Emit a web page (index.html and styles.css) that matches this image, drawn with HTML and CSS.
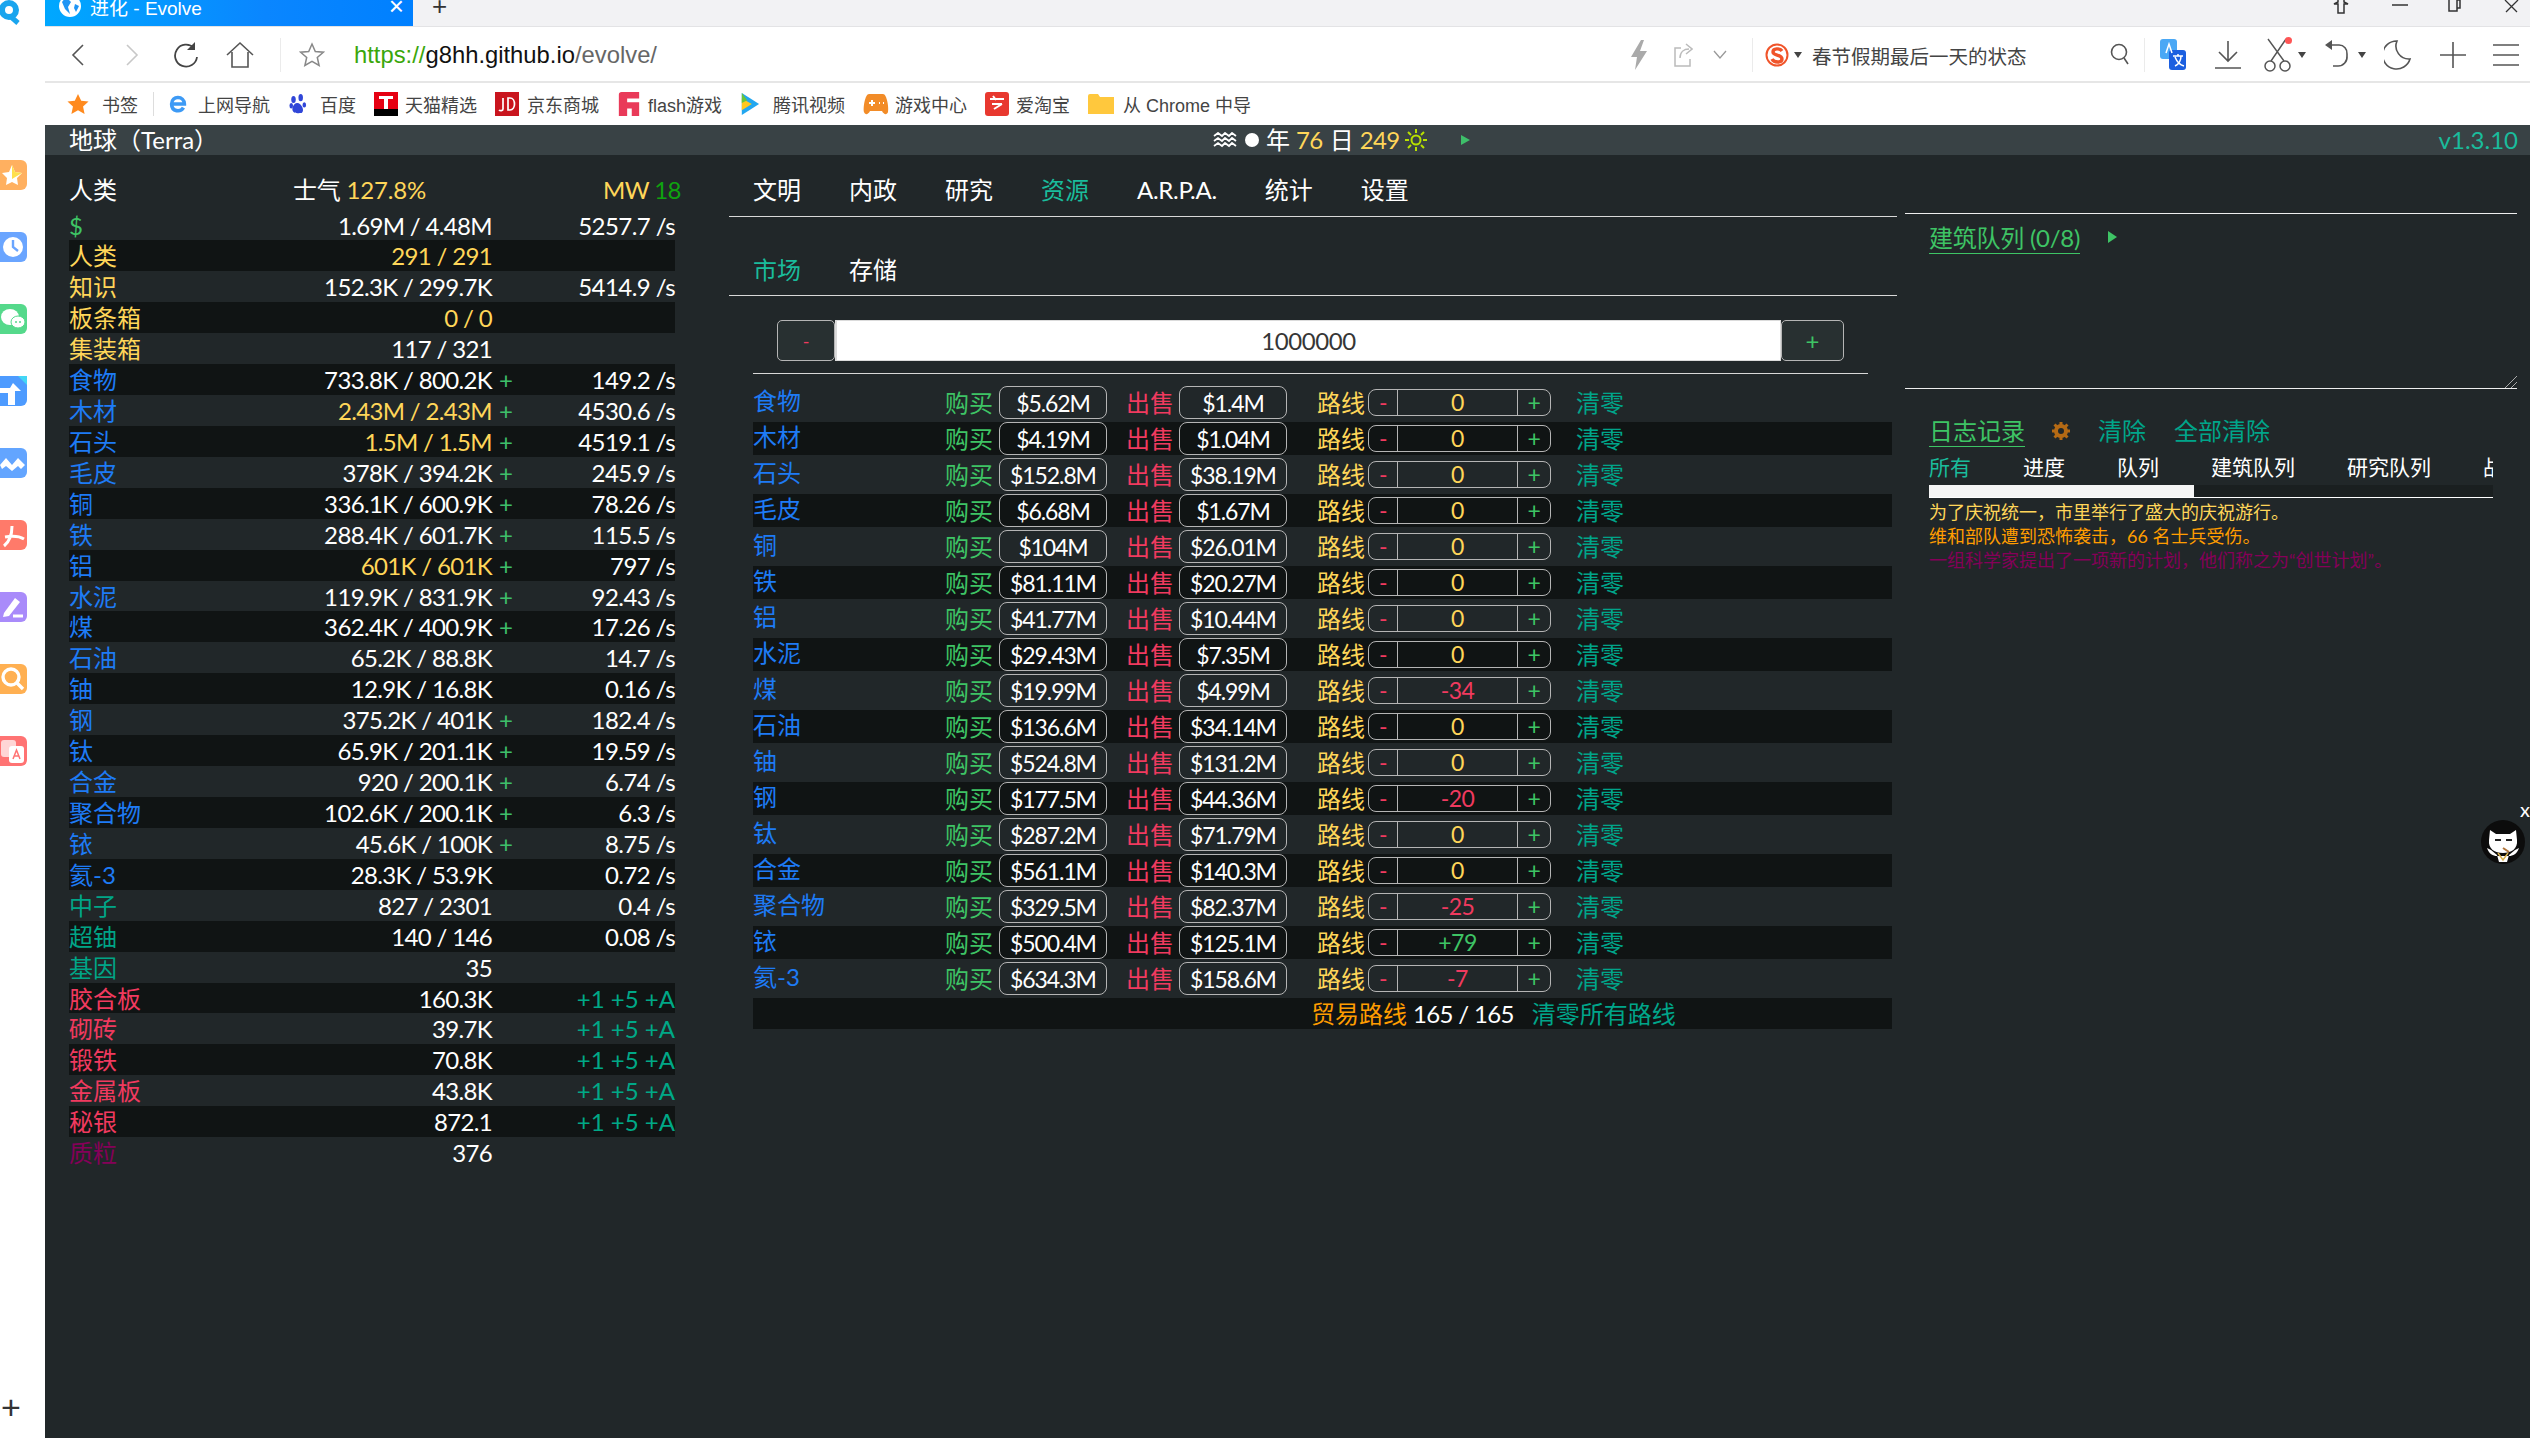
FILE: index.html
```html
<!DOCTYPE html>
<html lang="zh">
<head>
<meta charset="utf-8">
<title>进化 - Evolve</title>
<link rel="stylesheet" href="styles.css">
</head>
<body>
<div class="app">
<aside class="dock">
  <svg class="dock-logo" viewBox="0 0 24 26"><circle cx="9" cy="10" r="7" fill="none" stroke="#1aa5ee" stroke-width="6"/><path d="M10 16l8 7" stroke="#1aa5ee" stroke-width="5"/></svg>
  <div class="dock-list">
    <svg class="dock-ic" viewBox="0 0 27 30"><rect x="-8" width="35" height="30" rx="6" fill="#ffb060"/><path d="M12 5l3 7 7 1-5 5 1 7-6-3-6 3 1-7-5-5 7-1z" fill="#fff"/><path d="M12 5l3 7 7 1-10 6z" fill="#ffe04d"/></svg>
    <svg class="dock-ic" viewBox="0 0 27 30"><rect x="-8" width="35" height="30" rx="6" fill="#6aa5ff"/><circle cx="13" cy="15" r="10" fill="#fff"/><path d="M13 8v7l5 4" stroke="#6aa5ff" stroke-width="2.4" fill="none"/></svg>
    <svg class="dock-ic" viewBox="0 0 27 30"><rect x="-8" width="35" height="30" rx="6" fill="#55d98b"/><ellipse cx="10" cy="13" rx="9" ry="8" fill="#fff"/><ellipse cx="18" cy="18" rx="7" ry="6" fill="#fff" stroke="#55d98b"/><circle cx="16" cy="18" r="1" fill="#55d98b"/><circle cx="20" cy="18" r="1" fill="#55d98b"/></svg>
    <svg class="dock-ic" viewBox="0 0 27 30"><rect x="-8" width="35" height="30" rx="6" fill="#4d9bff"/><path d="M18 0l9 9V0z" fill="#43d6f5"/><path d="M0 12h10l3-5 8 8h-6v14H8V17H0z" fill="#fff"/></svg>
    <svg class="dock-ic" viewBox="0 0 27 30"><rect x="-8" width="35" height="30" rx="6" fill="#63a5ff"/><path d="M0 17l6-7 6 7 6-7 7 7-4 4-3-3-6 5-6-5-4 3z" fill="#fff"/></svg>
    <svg class="dock-ic" viewBox="0 0 27 30"><rect x="-8" width="35" height="30" rx="6" fill="#ff7a6a"/><path d="M4 26c5-4 8-12 8-20M5 17c6-1 14-1 19 2" stroke="#fff" stroke-width="3" fill="none"/></svg>
    <svg class="dock-ic" viewBox="0 0 27 30"><rect x="-8" width="35" height="30" rx="6" fill="#a98bfa"/><path d="M4 21L15 6l5 4L9 24l-6 1z" fill="#fff"/><path d="M13 24h10" stroke="#fff" stroke-width="3"/></svg>
    <svg class="dock-ic" viewBox="0 0 27 30"><rect x="-8" width="35" height="30" rx="6" fill="#ffb052"/><circle cx="11" cy="13" r="8" fill="none" stroke="#fff" stroke-width="3.4"/><path d="M17 19l6 6" stroke="#fff" stroke-width="3.4"/></svg>
    <svg class="dock-ic" viewBox="0 0 27 30"><rect x="-8" width="35" height="30" rx="6" fill="#ff7373"/><rect x="1" y="4" width="15" height="17" rx="3" fill="#ffd5d5"/><rect x="9" y="10" width="15" height="17" rx="3" fill="#fff"/><path d="M13 23l3.500-9 3.500 9M14.500 20h4" stroke="#ff7373" stroke-width="1.500" fill="none"/></svg>
  </div>
  <div class="dock-plus">+</div>
</aside>
<div class="window">
  <div class="tabstrip">
    <div class="tab">
      <svg class="tab-ic" viewBox="0 0 24 24"><circle cx="12" cy="12" r="11" fill="#fff"/><path d="M8 3l5 5-3 5 2 7-5-5-3-7zM17 10l4 2-3 6-2-4z" fill="#1f95f5"/></svg>
      <span class="tab-title">进化 - Evolve</span>
      <span class="tab-x">×</span>
    </div>
    <span class="tab-new">+</span>
    <div class="winctl">
      <svg class="win-shirt" viewBox="0 0 18 14"><path d="M6 0v2L2 4v0h4v9h6V4h4L12 2V0" fill="none" stroke="#333" stroke-width="1.500"/></svg>
      <svg class="win-min" viewBox="0 0 16 14"><path d="M0 5h16" stroke="#333" stroke-width="1.500"/></svg>
      <svg class="win-max" viewBox="0 0 16 14"><path d="M2 0v11h8V0M10 0h3v8h-3" fill="none" stroke="#333" stroke-width="1.500"/></svg>
      <svg class="win-x" viewBox="0 0 16 14"><path d="M1 0l12 12M14 0L2 12" stroke="#333" stroke-width="1.300"/></svg>
    </div>
  </div>
  <div class="toolbar">
    <svg class="tb tb-back" viewBox="0 0 16 24"><path d="M13 2L3 12l10 10" fill="none" stroke="#555" stroke-width="1.600"/></svg>
    <svg class="tb tb-fwd" viewBox="0 0 16 24"><path d="M3 2l10 10L3 22" fill="none" stroke="#c8c8c8" stroke-width="1.600"/></svg>
    <svg class="tb tb-reload" viewBox="0 0 26 26"><path d="M21 6A11 11 0 1 0 24 15" fill="none" stroke="#444" stroke-width="1.800"/><path d="M22 0v8h-8z" fill="#444"/></svg>
    <svg class="tb tb-home" viewBox="0 0 30 28"><path d="M2 14L15 2l13 12M7 11v15h16V11" fill="none" stroke="#555" stroke-width="1.600"/></svg>
    <span class="tb-sep tb-sep1"></span>
    <svg class="tb tb-star" viewBox="0 0 26 26"><path d="M13 2l3.300 7.500 8 .7-6 5.300 1.800 8L13 19.300 5.900 23.500l1.800-8-6-5.300 8-.7z" fill="none" stroke="#888" stroke-width="1.500"/></svg>
    <span class="url"><span class="url-s">https://</span><span class="url-h">g8hh.github.io</span><span class="url-p">/evolve/</span></span>
    <svg class="tb tb-bolt" viewBox="0 0 18 30"><path d="M11 0L1 17h6l-2 13 12-19h-7l4-11z" fill="#aaa"/></svg>
    <svg class="tb tb-share" viewBox="0 0 20 24"><path d="M8 5H2v18h15v-7M7 15c0-6 4-9 9-9M13 1l6 5-6 5" fill="none" stroke="#bbb" stroke-width="1.500"/></svg>
    <svg class="tb tb-chev" viewBox="0 0 14 10"><path d="M1 1l6 7 6-7" fill="none" stroke="#999" stroke-width="1.300"/></svg>
    <span class="tb-sep tb-sep2"></span>
    <svg class="tb tb-sogou" viewBox="0 0 24 24"><circle cx="12" cy="12" r="10.500" fill="#fff" stroke="#f0542a" stroke-width="2"/><path d="M17 8c-2-3-9-3-9 1 0 4 9 2 9 7 0 4-8 4-10 0" fill="none" stroke="#f0542a" stroke-width="3.400"/></svg>
    <span class="caret caret-a"></span>
    <span class="search-text">春节假期最后一天的状态</span>
    <svg class="tb tb-search" viewBox="0 0 20 24"><circle cx="9" cy="9" r="7.500" fill="none" stroke="#555" stroke-width="1.600"/><path d="M14 15l4 6" stroke="#555" stroke-width="1.600"/></svg>
    <span class="tb-sep tb-sep3"></span>
    <svg class="tb tb-trans" viewBox="0 0 26 32"><rect x="0" y="0" width="17" height="20" rx="3" fill="#4aa8f5"/><rect x="9" y="11" width="17" height="20" rx="3" fill="#1b5fe0"/><path d="M6 14l3-9 3 9M13 17h10M18 15v2M15 27c4-2 6-6 6-10M15 18c2 5 5 8 9 9" stroke="#fff" stroke-width="1.500" fill="none"/></svg>
    <svg class="tb tb-dl" viewBox="0 0 28 28"><path d="M14 0v20M5 11l9 9 9-9M1 27h26" fill="none" stroke="#555" stroke-width="1.600"/></svg>
    <svg class="tb tb-cut" viewBox="0 0 28 36"><path d="M4 2l16 22M22 2L7 24" stroke="#555" stroke-width="1.400" fill="none"/><circle cx="6" cy="29" r="5" fill="none" stroke="#555" stroke-width="1.500"/><circle cx="21" cy="29" r="5" fill="none" stroke="#555" stroke-width="1.500"/></svg>
    <span class="reddot"></span>
    <span class="caret caret-b"></span>
    <svg class="tb tb-undo" viewBox="0 0 26 30"><path d="M7 5h8a8 8 0 0 1 8 9v2a9 9 0 0 1-9 10H9" fill="none" stroke="#555" stroke-width="1.600"/><path d="M8 0v10L1 5z" fill="#555"/></svg>
    <span class="caret caret-c"></span>
    <svg class="tb tb-moon" viewBox="0 0 28 32"><path d="M13 2A14 14 0 1 0 26 20 13 13 0 0 1 13 2z" fill="none" stroke="#555" stroke-width="1.600"/></svg>
    <svg class="tb tb-plus" viewBox="0 0 26 26"><path d="M13 0v26M0 13h26" stroke="#555" stroke-width="1.600"/></svg>
    <svg class="tb tb-menu" viewBox="0 0 26 24"><path d="M0 2h26M0 12h26M0 22h26" stroke="#555" stroke-width="1.600"/></svg>
  </div>
  <div class="bookmarks">
    <svg class="bm-ic bm-star" viewBox="0 0 24 24"><path d="M12 1l3.500 7.500 8 .9-6 5.400 1.700 8L12 18.800 4.800 22.800l1.700-8-6-5.400 8-.9z" fill="#ff8a1e"/></svg>
    <span class="bm bm-1">书签</span>
    <span class="bm-sep"></span>
    <svg class="bm-ic bm-e" viewBox="0 0 22 24"><path d="M3 12h15c0-9-14-10-14 0 0 9 10 9 13 4" fill="none" stroke="#3d9af5" stroke-width="4"/></svg>
    <span class="bm bm-2">上网导航</span>
    <svg class="bm-ic bm-paw" viewBox="0 0 20 24"><g fill="#3046d8"><ellipse cx="5" cy="7" rx="2.500" ry="4"/><ellipse cx="13" cy="5" rx="2.500" ry="4"/><ellipse cx="2.500" cy="14" rx="2" ry="3"/><ellipse cx="17" cy="13" rx="2" ry="3"/><path d="M9 11c-4 0-7 7-4 10 2 2 7 1 9 1 4-2 0-11-5-11z"/></g></svg>
    <span class="bm bm-3">百度</span>
    <svg class="bm-ic bm-t" viewBox="0 0 24 24"><rect width="24" height="24" fill="#e60012"/><rect y="17" width="24" height="7" fill="#000"/><path d="M5 4h14v3h-5v10h-4V7H5z" fill="#fff"/></svg>
    <span class="bm bm-4">天猫精选</span>
    <svg class="bm-ic bm-jd" viewBox="0 0 24 24"><rect width="24" height="24" fill="#c9151e"/><path d="M8 6v11c0 2-3 2-4 1M13 6v12h2c6 0 6-12 0-12z" fill="none" stroke="#fff" stroke-width="1.700"/></svg>
    <span class="bm bm-5">京东商城</span>
    <svg class="bm-ic bm-f" viewBox="0 0 22 26"><path d="M0 3a3 3 0 0 1 3-3h19v7H9v4h13v15h-8v-8H9v8H0z" fill="#e93a59"/></svg>
    <span class="bm bm-6">flash游戏</span>
    <svg class="bm-ic bm-v" viewBox="0 0 22 26"><path d="M2 1l19 12L2 25z" fill="#22a7f0"/><path d="M2 7l11 6-11 7z" fill="#ffc71e"/><path d="M2 1v11l6-3z" fill="#6ac53a"/></svg>
    <span class="bm bm-7">腾讯视频</span>
    <svg class="bm-ic bm-g" viewBox="0 0 26 22"><path d="M6 1h14c4 0 6 14 5 18-1 3-4 3-6-1H7c-2 4-5 4-6 1C0 15 2 1 6 1z" fill="#f28c28"/><path d="M6 10h6M9 7v6M16 10h1M20 10h1" stroke="#fff" stroke-width="2"/></svg>
    <span class="bm bm-8">游戏中心</span>
    <svg class="bm-ic bm-tb" viewBox="0 0 24 24"><rect width="24" height="24" rx="3" fill="#e8382f"/><path d="M5 7h14M7 12h10M9 17l8-5M8 4l3 4" stroke="#fff" stroke-width="2"/></svg>
    <span class="bm bm-9">爱淘宝</span>
    <svg class="bm-ic bm-fd" viewBox="0 0 26 20"><path d="M0 2a2 2 0 0 1 2-2h8l2 3h14v17H0z" fill="#ffc83d"/></svg>
    <span class="bm bm-10">从 Chrome 中导</span>
  </div>

  <div class="game">
    <header class="topbar">
      <span class="planet">地球（Terra）</span>
      <div class="calendar">
        <svg class="cal-wave" viewBox="0 0 24 16"><path d="M1 4l4-3 4 3 3-3 4 3 3-3 4 3M1 9l4-3 4 3 3-3 4 3 3-3 4 3M1 14l4-3 4 3 3-3 4 3 3-3 4 3" fill="none" stroke="#fff" stroke-width="1.800"/></svg>
        <span class="cal-moon"></span>
        <span class="cal-l">年</span><span class="cal-n">76</span><span class="cal-l">日</span><span class="cal-n">249</span>
        <svg class="cal-sun" viewBox="0 0 22 22"><circle cx="11" cy="11" r="4.500" fill="none" stroke="#b8e000" stroke-width="2"/><path d="M11 0v4M11 18v4M0 11h4M18 11h4M3 3l3 3M16 16l3 3M19 3l-3 3M6 16l-3 3" stroke="#b8e000" stroke-width="2"/></svg>
        <span class="cal-play"></span>
      </div>
      <span class="version">v1.3.10</span>
    </header>
    <div class="columns">
      <section class="left">
        <div class="race">
          <span class="race-name">人类</span>
          <span class="race-morale"><span class="white">士气</span> <span class="yellow">127.8%</span></span>
          <span class="race-mw"><span class="yellow">MW</span> <span class="green-d">18</span></span>
        </div>
        <div class="res-list">
          <div class="res"><span class="green">$</span><span class="val">1.69M / 4.48M</span><span></span><span class="rate">5257.7 /s</span></div>
          <div class="res"><span class="yellow">人类</span><span class="val yellow">291 / 291</span><span></span><span></span></div>
          <div class="res"><span class="yellow">知识</span><span class="val">152.3K / 299.7K</span><span></span><span class="rate">5414.9 /s</span></div>
          <div class="res"><span class="yellow">板条箱</span><span class="val yellow">0 / 0</span><span></span><span></span></div>
          <div class="res"><span class="yellow">集装箱</span><span class="val">117 / 321</span><span></span><span></span></div>
          <div class="res"><span class="blue">食物</span><span class="val">733.8K / 800.2K</span><span class="plus">+</span><span class="rate">149.2 /s</span></div>
          <div class="res"><span class="blue">木材</span><span class="val yellow">2.43M / 2.43M</span><span class="plus">+</span><span class="rate">4530.6 /s</span></div>
          <div class="res"><span class="blue">石头</span><span class="val yellow">1.5M / 1.5M</span><span class="plus">+</span><span class="rate">4519.1 /s</span></div>
          <div class="res"><span class="blue">毛皮</span><span class="val">378K / 394.2K</span><span class="plus">+</span><span class="rate">245.9 /s</span></div>
          <div class="res"><span class="blue">铜</span><span class="val">336.1K / 600.9K</span><span class="plus">+</span><span class="rate">78.26 /s</span></div>
          <div class="res"><span class="blue">铁</span><span class="val">288.4K / 601.7K</span><span class="plus">+</span><span class="rate">115.5 /s</span></div>
          <div class="res"><span class="blue">铝</span><span class="val yellow">601K / 601K</span><span class="plus">+</span><span class="rate">797 /s</span></div>
          <div class="res"><span class="blue">水泥</span><span class="val">119.9K / 831.9K</span><span class="plus">+</span><span class="rate">92.43 /s</span></div>
          <div class="res"><span class="blue">煤</span><span class="val">362.4K / 400.9K</span><span class="plus">+</span><span class="rate">17.26 /s</span></div>
          <div class="res"><span class="blue">石油</span><span class="val">65.2K / 88.8K</span><span></span><span class="rate">14.7 /s</span></div>
          <div class="res"><span class="blue">铀</span><span class="val">12.9K / 16.8K</span><span></span><span class="rate">0.16 /s</span></div>
          <div class="res"><span class="blue">钢</span><span class="val">375.2K / 401K</span><span class="plus">+</span><span class="rate">182.4 /s</span></div>
          <div class="res"><span class="blue">钛</span><span class="val">65.9K / 201.1K</span><span class="plus">+</span><span class="rate">19.59 /s</span></div>
          <div class="res"><span class="blue">合金</span><span class="val">920 / 200.1K</span><span class="plus">+</span><span class="rate">6.74 /s</span></div>
          <div class="res"><span class="blue">聚合物</span><span class="val">102.6K / 200.1K</span><span class="plus">+</span><span class="rate">6.3 /s</span></div>
          <div class="res"><span class="blue">铱</span><span class="val">45.6K / 100K</span><span class="plus">+</span><span class="rate">8.75 /s</span></div>
          <div class="res"><span class="blue">氦-3</span><span class="val">28.3K / 53.9K</span><span></span><span class="rate">0.72 /s</span></div>
          <div class="res"><span class="teal">中子</span><span class="val">827 / 2301</span><span></span><span class="rate">0.4 /s</span></div>
          <div class="res"><span class="teal">超铀</span><span class="val">140 / 146</span><span></span><span class="rate">0.08 /s</span></div>
          <div class="res"><span class="teal">基因</span><span class="val">35</span><span></span><span></span></div>
          <div class="res"><span class="red">胶合板</span><span class="val">160.3K</span><span class="craft">+1 +5 +A</span></div>
          <div class="res"><span class="red">砌砖</span><span class="val">39.7K</span><span class="craft">+1 +5 +A</span></div>
          <div class="res"><span class="red">锻铁</span><span class="val">70.8K</span><span class="craft">+1 +5 +A</span></div>
          <div class="res"><span class="red">金属板</span><span class="val">43.8K</span><span class="craft">+1 +5 +A</span></div>
          <div class="res"><span class="red">秘银</span><span class="val">872.1</span><span class="craft">+1 +5 +A</span></div>
          <div class="res"><span class="purple">质粒</span><span class="val">376</span><span></span><span></span></div>
        </div>
      </section>

      <main class="center">
        <nav class="tabs main-tabs">
          <span>文明</span><span>内政</span><span>研究</span><span class="active">资源</span><span class="arpa">A.R.P.A.</span><span>统计</span><span>设置</span>
        </nav>
        <nav class="tabs sub-tabs">
          <span class="active">市场</span><span>存储</span>
        </nav>
        <div class="qty">
          <span class="qty-btn qty-minus red">-</span>
          <span class="qty-input">1000000</span>
          <span class="qty-btn qty-plus green">+</span>
        </div>
        <div class="qty-rule"></div>
        <div class="market">
          <div class="mk"><span class="mk-name">食物</span><span class="green">购买</span><span class="price">$5.62M</span><span class="red mk-sell">出售</span><span class="price">$1.4M</span><span class="yellow mk-route">路线</span><span class="route"><span class="red">-</span><span class="yellow">0</span><span class="green">+</span></span><span class="mk-clear">清零</span></div>
          <div class="mk"><span class="mk-name">木材</span><span class="green">购买</span><span class="price">$4.19M</span><span class="red mk-sell">出售</span><span class="price">$1.04M</span><span class="yellow mk-route">路线</span><span class="route"><span class="red">-</span><span class="yellow">0</span><span class="green">+</span></span><span class="mk-clear">清零</span></div>
          <div class="mk"><span class="mk-name">石头</span><span class="green">购买</span><span class="price">$152.8M</span><span class="red mk-sell">出售</span><span class="price">$38.19M</span><span class="yellow mk-route">路线</span><span class="route"><span class="red">-</span><span class="yellow">0</span><span class="green">+</span></span><span class="mk-clear">清零</span></div>
          <div class="mk"><span class="mk-name">毛皮</span><span class="green">购买</span><span class="price">$6.68M</span><span class="red mk-sell">出售</span><span class="price">$1.67M</span><span class="yellow mk-route">路线</span><span class="route"><span class="red">-</span><span class="yellow">0</span><span class="green">+</span></span><span class="mk-clear">清零</span></div>
          <div class="mk"><span class="mk-name">铜</span><span class="green">购买</span><span class="price">$104M</span><span class="red mk-sell">出售</span><span class="price">$26.01M</span><span class="yellow mk-route">路线</span><span class="route"><span class="red">-</span><span class="yellow">0</span><span class="green">+</span></span><span class="mk-clear">清零</span></div>
          <div class="mk"><span class="mk-name">铁</span><span class="green">购买</span><span class="price">$81.11M</span><span class="red mk-sell">出售</span><span class="price">$20.27M</span><span class="yellow mk-route">路线</span><span class="route"><span class="red">-</span><span class="yellow">0</span><span class="green">+</span></span><span class="mk-clear">清零</span></div>
          <div class="mk"><span class="mk-name">铝</span><span class="green">购买</span><span class="price">$41.77M</span><span class="red mk-sell">出售</span><span class="price">$10.44M</span><span class="yellow mk-route">路线</span><span class="route"><span class="red">-</span><span class="yellow">0</span><span class="green">+</span></span><span class="mk-clear">清零</span></div>
          <div class="mk"><span class="mk-name">水泥</span><span class="green">购买</span><span class="price">$29.43M</span><span class="red mk-sell">出售</span><span class="price">$7.35M</span><span class="yellow mk-route">路线</span><span class="route"><span class="red">-</span><span class="yellow">0</span><span class="green">+</span></span><span class="mk-clear">清零</span></div>
          <div class="mk"><span class="mk-name">煤</span><span class="green">购买</span><span class="price">$19.99M</span><span class="red mk-sell">出售</span><span class="price">$4.99M</span><span class="yellow mk-route">路线</span><span class="route"><span class="red">-</span><span class="red">-34</span><span class="green">+</span></span><span class="mk-clear">清零</span></div>
          <div class="mk"><span class="mk-name">石油</span><span class="green">购买</span><span class="price">$136.6M</span><span class="red mk-sell">出售</span><span class="price">$34.14M</span><span class="yellow mk-route">路线</span><span class="route"><span class="red">-</span><span class="yellow">0</span><span class="green">+</span></span><span class="mk-clear">清零</span></div>
          <div class="mk"><span class="mk-name">铀</span><span class="green">购买</span><span class="price">$524.8M</span><span class="red mk-sell">出售</span><span class="price">$131.2M</span><span class="yellow mk-route">路线</span><span class="route"><span class="red">-</span><span class="yellow">0</span><span class="green">+</span></span><span class="mk-clear">清零</span></div>
          <div class="mk"><span class="mk-name">钢</span><span class="green">购买</span><span class="price">$177.5M</span><span class="red mk-sell">出售</span><span class="price">$44.36M</span><span class="yellow mk-route">路线</span><span class="route"><span class="red">-</span><span class="red">-20</span><span class="green">+</span></span><span class="mk-clear">清零</span></div>
          <div class="mk"><span class="mk-name">钛</span><span class="green">购买</span><span class="price">$287.2M</span><span class="red mk-sell">出售</span><span class="price">$71.79M</span><span class="yellow mk-route">路线</span><span class="route"><span class="red">-</span><span class="yellow">0</span><span class="green">+</span></span><span class="mk-clear">清零</span></div>
          <div class="mk"><span class="mk-name">合金</span><span class="green">购买</span><span class="price">$561.1M</span><span class="red mk-sell">出售</span><span class="price">$140.3M</span><span class="yellow mk-route">路线</span><span class="route"><span class="red">-</span><span class="yellow">0</span><span class="green">+</span></span><span class="mk-clear">清零</span></div>
          <div class="mk"><span class="mk-name">聚合物</span><span class="green">购买</span><span class="price">$329.5M</span><span class="red mk-sell">出售</span><span class="price">$82.37M</span><span class="yellow mk-route">路线</span><span class="route"><span class="red">-</span><span class="red">-25</span><span class="green">+</span></span><span class="mk-clear">清零</span></div>
          <div class="mk"><span class="mk-name">铱</span><span class="green">购买</span><span class="price">$500.4M</span><span class="red mk-sell">出售</span><span class="price">$125.1M</span><span class="yellow mk-route">路线</span><span class="route"><span class="red">-</span><span class="green">+79</span><span class="green">+</span></span><span class="mk-clear">清零</span></div>
          <div class="mk"><span class="mk-name">氦-3</span><span class="green">购买</span><span class="price">$634.3M</span><span class="red mk-sell">出售</span><span class="price">$158.6M</span><span class="yellow mk-route">路线</span><span class="route"><span class="red">-</span><span class="red">-7</span><span class="green">+</span></span><span class="mk-clear">清零</span></div>
        </div>
        <div class="mk-foot"><span class="orange">贸易路线</span><span class="foot-count">165 / 165</span><span class="foot-clear">清零所有路线</span></div>
      </main>

      <aside class="right">
        <div class="queue">
          <div class="queue-head"><span class="queue-title">建筑队列 (0/8)</span><span class="queue-play"></span></div>
          <svg class="grip" viewBox="0 0 12 12"><path d="M0 12L12 0M6 12l6-6" stroke="#aaa" stroke-width="1"/></svg>
        </div>
        <div class="log">
          <div class="log-head">
            <span class="log-title">日志记录</span>
            <svg class="gear" viewBox="0 0 18 18"><circle cx="9" cy="9" r="5" fill="none" stroke="#b56a14" stroke-width="4"/><path d="M9 0v4M9 14v4M0 9h4M14 9h4M2.500 2.500l3 3M12.500 12.500l3 3M15.500 2.500l-3 3M5.500 12.500l-3 3" stroke="#b56a14" stroke-width="3"/></svg>
            <span class="log-link">清除</span>
            <span class="log-link">全部清除</span>
          </div>
          <div class="log-tabs">
            <span class="active">所有</span><span>进度</span><span>队列</span><span>建筑队列</span><span>研究队列</span><span>战斗</span>
          </div>
          <div class="log-scroll"><span class="log-thumb"></span></div>
          <div class="log-msgs">
            <p class="yellow">为了庆祝统一，市里举行了盛大的庆祝游行。</p>
            <p class="orange">维和部队遭到恐怖袭击，66 名士兵受伤。</p>
            <p class="purple">一组科学家提出了一项新的计划，他们称之为“创世计划”。</p>
          </div>
        </div>
      </aside>
    </div>
  </div>
</div>
</div>
<div class="pet">
  <span class="pet-x">x</span>
  <svg class="pet-face" viewBox="0 0 44 44"><circle cx="22" cy="22" r="22" fill="#0c0c0c"/><path d="M9 10l6 4h14l6-4 1 10c1 9-6 13-14 13S7 29 8 20z" fill="#fff"/><path d="M6 28c2 6 6 8 10 8h12c4 0 8-2 10-8l-4 2-6 5-2 7h-8l-2-7-6-5z" fill="#fff"/><path d="M14 20h6M25 20h6" stroke="#222" stroke-width="2"/><path d="M22 28l6 4" stroke="#b0753a" stroke-width="2"/><path d="M17 33l5 7 5-7" fill="none" stroke="#d8b04a" stroke-width="1.500"/></svg>
</div>
</body>
</html>
```

FILE: styles.css
```css
* { box-sizing: border-box; }
html, body { margin: 0; height: 100%; overflow: hidden; background: #fff; }
body { font-family: Lato, "Noto Sans CJK SC", sans-serif; }
p { margin: 0; }
.app { display: flex; width: 2530px; height: 1438px; }

/* left dock */
.dock { width: 45px; flex: none; display: flex; flex-direction: column; background: #fff; }
.dock-logo { width: 24px; height: 26px; display: block; }
.dock-list { margin-top: 134px; display: flex; flex-direction: column; gap: 42px; }
.dock-ic { width: 27px; height: 30px; display: block; }
.dock-plus { margin-top: auto; margin-bottom: 14px; padding-left: 1px; font: 300 34px/34px "Liberation Sans", sans-serif; color: #333; }

/* browser chrome */
.window { flex: 1; min-width: 0; display: flex; flex-direction: column; }
.tabstrip { height: 27px; flex: none; display: flex; background: #f2f2f4; border-bottom: 1px solid #e3e3e5; position: relative; }
.tab { width: 368px; height: 26px; overflow: hidden; display: flex; align-items: center; padding: 0 9px 14px 13px; background: linear-gradient(90deg, #00a8ff, #0a86ff 60%, #0080ff); color: #fff; font: 19px "Liberation Sans", "Noto Sans CJK SC", sans-serif; }
.tab-ic { width: 24px; height: 24px; flex: none; }
.tab-title { margin-left: 8px; flex: 1; }
.tab-x { font-size: 26px; line-height: 20px; }
.tab-new { margin-left: 19px; font: 26px/12px "Liberation Sans", sans-serif; color: #333; }
.winctl { margin-left: auto; display: flex; align-items: flex-start; padding-right: 10px; }
.win-shirt { width: 18px; height: 14px; margin-right: 42px; }
.win-min { width: 16px; height: 14px; margin-right: 39px; }
.win-max { width: 16px; height: 14px; margin-right: 41px; }
.win-x { width: 16px; height: 14px; }

.toolbar { height: 56px; flex: none; display: flex; align-items: center; padding-top: 2px; background: #fff; border-bottom: 2px solid #e6e6e6; }
.tb { flex: none; display: block; }
.tb-back { width: 16px; height: 24px; margin-left: 25px; }
.tb-fwd { width: 16px; height: 24px; margin-left: 38px; }
.tb-reload { width: 26px; height: 26px; margin-left: 33px; }
.tb-home { width: 30px; height: 28px; margin-left: 26px; }
.tb-sep { width: 1px; height: 34px; background: #ebebeb; flex: none; }
.tb-sep1 { margin-left: 25px; }
.tb-star { width: 26px; height: 26px; margin-left: 18px; }
.url { margin-left: 29px; font: 23.800px "Liberation Sans", sans-serif; width: 1292px; flex: none; }
.url-s { color: #3aa60a; }
.url-h { color: #111; }
.url-p { color: #666; }
.tb-bolt { width: 18px; height: 30px; margin-left: -16px; }
.tb-share { width: 20px; height: 24px; margin-left: 25px; }
.tb-chev { width: 14px; height: 10px; margin-left: 20px; }
.tb-sep2 { margin-left: 25px; }
.tb-sogou { width: 24px; height: 24px; margin-left: 12px; }
.caret { width: 0; height: 0; flex: none; border: 4px solid transparent; border-top: 6px solid #444; border-bottom: 0; }
.caret-a { margin-left: 5px; }
.search-text { margin-left: 10px; width: 298px; flex: none; font: 19.500px "Noto Sans CJK SC", sans-serif; color: #444; white-space: nowrap; }
.tb-search { width: 20px; height: 24px; }
.tb-sep3 { margin-left: 14px; }
.tb-trans { width: 26px; height: 32px; margin-left: 15px; }
.tb-dl { width: 28px; height: 28px; margin-left: 28px; }
.tb-cut { width: 28px; height: 36px; margin-left: 22px; }
.reddot { width: 7px; height: 7px; border-radius: 50%; background: #f55; margin: -30px 0 0 -7px; flex: none; }
.caret-b { margin-left: 6px; }
.tb-undo { width: 26px; height: 30px; margin-left: 18px; }
.caret-c { margin-left: 8px; }
.tb-moon { width: 28px; height: 32px; margin-left: 18px; }
.tb-plus { width: 26px; height: 26px; margin-left: 28px; }
.tb-menu { width: 26px; height: 24px; margin-left: 27px; }

.bookmarks { height: 42px; flex: none; display: flex; align-items: center; background: #fff; font: 18px "Noto Sans CJK SC", sans-serif; color: #444; }
.bm { flex: none; white-space: nowrap; }
.bm-ic { flex: none; display: block; }
.bm-star { width: 22px; height: 22px; margin-left: 22px; }
.bm-1 { margin-left: 13px; }
.bm-sep { width: 1px; height: 24px; background: #ddd; margin-left: 15px; }
.bm-e { width: 20px; height: 22px; margin-left: 14px; }
.bm-2 { margin-left: 10px; }
.bm-paw { width: 18px; height: 22px; margin-left: 19px; }
.bm-3 { margin-left: 13px; }
.bm-t { width: 24px; height: 24px; margin-left: 18px; }
.bm-4 { margin-left: 7px; }
.bm-jd { width: 24px; height: 24px; margin-left: 18px; }
.bm-5 { margin-left: 8px; }
.bm-f { width: 22px; height: 24px; margin-left: 19px; }
.bm-6 { margin-left: 8px; font-family: "Liberation Sans", "Noto Sans CJK SC", sans-serif; }
.bm-v { width: 20px; height: 24px; margin-left: 18px; }
.bm-7 { margin-left: 13px; }
.bm-g { width: 26px; height: 22px; margin-left: 18px; }
.bm-8 { margin-left: 6px; }
.bm-tb { width: 24px; height: 24px; margin-left: 18px; }
.bm-9 { margin-left: 7px; }
.bm-fd { width: 26px; height: 20px; margin-left: 18px; }
.bm-10 { margin-left: 9px; font-family: "Liberation Sans", "Noto Sans CJK SC", sans-serif; }

/* game */
.game { flex: 1; min-height: 0; background: #212729; color: #fff; font-size: 24px; }
.topbar { height: 30px; display: flex; align-items: center; padding: 0 12px 0 24px; background: #394245; position: relative; line-height: 30px; }
.planet { width: 1144px; flex: none; }
.calendar { display: flex; align-items: center; height: 30px; }
.cal-wave { width: 24px; height: 16px; }
.cal-moon { width: 14px; height: 14px; border-radius: 50%; background: #fff; margin-left: 8px; }
.cal-l { margin-left: 7px; }
.cal-n { margin-left: 6px; color: #ffd659; letter-spacing: -.6px; }
.cal-sun { width: 22px; height: 22px; margin-left: 5px; }
.cal-play { margin-left: 34px; border-left: 9px solid #3ebf6a; border-top: 5.500px solid transparent; border-bottom: 5.500px solid transparent; }
.version { margin-left: auto; color: #1abc9c; }

.columns { display: flex; align-items: flex-start; }
.left { width: 630px; flex: none; padding-left: 24px; }
.race { height: 54.500px; display: flex; padding-top: 19px; line-height: 32px; position: relative; }
.race-name { width: 224px; flex: none; }
.race-morale { width: 310px; flex: none; letter-spacing: -.2px; }
.race-mw { white-space: nowrap; letter-spacing: -.6px; }
.res { display: grid; grid-template-columns: 200px 223px 32px 151px; height: 30.930px; line-height: 31px; white-space: nowrap; }
.res:nth-child(even) { background: #101414; }
.val { text-align: right; letter-spacing: -.65px; }
.plus { color: #3ebf6a; padding-left: 7px; }
.rate { text-align: right; letter-spacing: -.55px; }
.craft { text-align: right; color: #00a887; grid-column: 3 / 5; }

.white { color: #fff; }
.yellow { color: #ffd659; }
.green { color: #3ec465; }
.green-d { color: #0fa30f; }
.blue { color: #1e7bf5; }
.teal { color: #00a587; }
.red { color: #f03a5f; }
.orange { color: #ff9d00; }
.purple { color: #850059; }

.center { width: 1168px; flex: none; margin-left: 54px; }
.tabs { display: flex; gap: 48px; padding-left: 24px; border-bottom: 1px solid #d8d8d8; }
.tabs .active { color: #1abc9c; }
.arpa { letter-spacing: -.3px; }
.main-tabs { height: 62px; padding-top: 17px; line-height: 36px; }
.sub-tabs { height: 79px; padding-top: 35px; line-height: 36px; }
.qty { display: flex; margin: 24px 0 0 48px; width: 1067px; height: 41px; }
.qty-btn { flex: none; display: flex; align-items: center; justify-content: center; background: #283031; border: 1px solid #b5b5b5; border-radius: 5px; }
.qty-minus { width: 58px; font-size: 18px; }
.qty-plus { width: 63px; font-size: 24px; }
.qty-input { flex: 1; background: #fff; border: 1px solid #dbdbdb; border-left-width: 2px; color: #363636; text-align: center; line-height: 39px; font-size: 24px; letter-spacing: -.4px; }
.qty-rule { height: 1px; margin: 12px 0 12px 24px; width: 1115px; background: #d8d8d8; }
.market { margin-left: 24px; width: 1139px; display: flex; flex-direction: column; gap: 3px; }
.mk { display: grid; grid-template-columns: 192px 54px 108px 72px 108px 81px 183px 1fr; height: 33px; align-items: center; line-height: 33px; white-space: nowrap; }
.mk:nth-child(even) { background: #101414; }
.mk-name { color: #1e7bf5; margin-top: -4px; }
.price { height: 33px; display: block; border: 1px solid #b5b5b5; border-radius: 8px; text-align: center; line-height: 32px; font-size: 23px; letter-spacing: -1.100px; }
.mk-sell { padding-left: 19px; }
.mk-route { padding-left: 30px; }
.route { display: grid; grid-template-columns: 28px 1fr 33px; height: 27px; border: 1px solid #b5b5b5; border-radius: 8px; line-height: 25px; font-size: 23px; letter-spacing: -.5px; text-align: center; }
.route > span + span { border-left: 1px solid #b5b5b5; }
.mk-clear { color: #00a58a; padding-left: 25px; }
.mk-foot { margin: 3px 0 0 24px; width: 1139px; height: 31px; line-height: 31px; background: #101414; padding-left: 558px; white-space: nowrap; }
.foot-count { margin-left: 6px; letter-spacing: -.65px; }
.foot-clear { margin-left: 18px; color: #00a58a; }

.right { width: 612px; flex: none; margin-left: 8px; padding-top: 58px; }
.queue { height: 176px; border-top: 1px solid #eee; border-bottom: 1px solid #eee; padding-left: 24px; position: relative; }
.queue-head { display: flex; align-items: center; height: 46px; padding-top: 2px; }
.queue-title { color: #3ec465; line-height: 30px; border-bottom: 1px solid #3ec465; letter-spacing: -.25px; }
.queue-play { margin-left: 28px; margin-top: -2px; border-left: 9px solid #3ec465; border-top: 6px solid transparent; border-bottom: 6px solid transparent; }
.grip { position: absolute; right: 0; bottom: 0; width: 12px; height: 12px; }
.log { padding: 26px 24px 0; }
.log-head { display: flex; align-items: center; height: 32px; line-height: 32px; }
.log-title { color: #3ec465; border-bottom: 1px solid #3ec465; line-height: 31px; height: 32px; }
.gear { width: 18px; height: 18px; margin-left: 27px; }
.log-link { color: #00a58a; margin-left: 28px; }
.log-tabs { margin-top: 5px; height: 33px; display: flex; overflow: hidden; font-size: 21px; line-height: 30px; gap: 52px; white-space: nowrap; }
.log-tabs .active { color: #1abc9c; }
.log-scroll { height: 13px; background: #1a1f20; border-bottom: 1px solid #fff; display: block; }
.log-thumb { display: block; width: 265px; height: 12px; background: #f5f5f5; }
.log-msgs { font-size: 18px; line-height: 24px; padding-top: 2px; }

.pet { position: absolute; left: 2481px; top: 803px; width: 49px; height: 61px; }
.pet-x { position: absolute; right: 0; top: -2px; font-size: 20px; line-height: 16px; color: #fff; }
.pet-face { position: absolute; left: 0; top: 17px; width: 44px; height: 44px; }
```
